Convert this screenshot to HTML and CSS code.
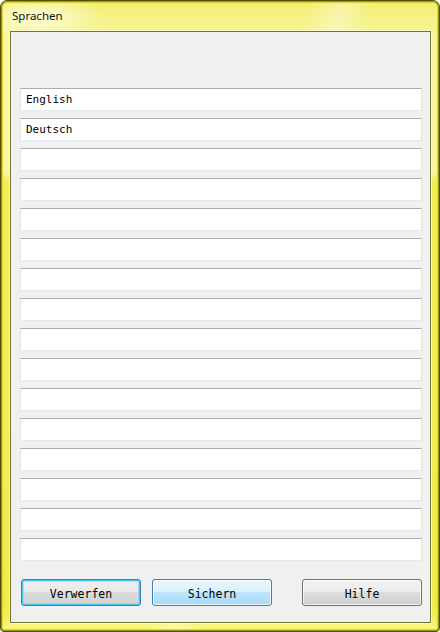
FILE: index.html
```html
<!DOCTYPE html>
<html>
<head>
<meta charset="utf-8">
<link rel="stylesheet" href="styles.css">
</head>
<body>
<div class="window">
  <div class="titlebar"><span class="title">Sprachen</span></div>
  <div class="client">
    <div class="list">
      <div class="field">English</div>
      <div class="field">Deutsch</div>
      <div class="field"></div>
      <div class="field"></div>
      <div class="field"></div>
      <div class="field"></div>
      <div class="field"></div>
      <div class="field"></div>
      <div class="field"></div>
      <div class="field"></div>
      <div class="field"></div>
      <div class="field"></div>
      <div class="field"></div>
      <div class="field"></div>
      <div class="field"></div>
      <div class="field"></div>
    </div>
    <div class="buttons">
      <button class="btn btn-focus">Verwerfen</button>
      <button class="btn btn-hover">Sichern</button>
      <span class="spacer"></span>
      <button class="btn">Hilfe</button>
    </div>
  </div>
</div>
</body>
</html>
```

FILE: styles.css
```css
html, body {
  margin: 0;
  padding: 0;
  width: 440px;
  height: 632px;
  overflow: hidden;
  background: #ffffff;
}

.window {
  box-sizing: border-box;
  width: 440px;
  height: 632px;
  border: 1px solid #4f4c00;
  border-radius: 7px 7px 4px 4px;
  box-shadow: inset 0 0 0 1px #a09c10, inset 0 0 0 2px #d6d235;
  background:
    radial-gradient(ellipse 70px 22px at 36px 16px, rgba(255,255,235,0.85), rgba(255,255,235,0) 100%),
    linear-gradient(105deg, rgba(255,255,255,0) 0, rgba(255,255,255,0) 300px, rgba(255,255,255,0.35) 330px, rgba(255,255,255,0) 360px),
    linear-gradient(to bottom, #f2ee70 0, #f8f6a2 40px, #f8f6a0 172px, #f1ee55 180px, #efec4c 610px, #f8f680 628px);
  padding: 0 8px 8px 9px;
  display: flex;
  flex-direction: column;
}

.titlebar {
  height: 30px;
  flex: none;
  display: flex;
  align-items: flex-start;
}

.title {
  font-family: "Segoe UI", "Noto Sans", sans-serif;
  font-size: 11.5px;
  color: #111111;
  margin: 7px 0 0 2px;
  line-height: 16px;
}

.client {
  flex: 1;
  box-sizing: border-box;
  border: 1px solid #737337;
  box-shadow: 0 0 0 1px rgba(255,255,220,0.7);
  background: #f0f0f0;
  padding: 56px 8px 0 9px;
  display: flex;
  flex-direction: column;
}

.list {
  display: flex;
  flex-direction: column;
  gap: 7px;
}

.field {
  box-sizing: border-box;
  height: 23px;
  background: #ffffff;
  border-style: solid;
  border-width: 1px;
  border-color: #abadb3 #e2e3ea #e3e9ef #e2e3ea;
  font-family: "DejaVu Sans Mono", "Liberation Mono", monospace;
  font-size: 11px;
  line-height: 21px;
  color: #000000;
  padding-left: 5px;
}

.buttons {
  display: flex;
  align-items: center;
  margin-top: 18px;
  gap: 11px;
  padding-left: 1px;
}

.spacer {
  flex: 1;
}

.btn {
  box-sizing: border-box;
  width: 120px;
  height: 27px;
  margin: 0;
  padding: 2px 0 0 0;
  border: 1px solid #707070;
  border-radius: 3px;
  background: linear-gradient(to bottom, #f2f2f2 0, #ebebeb 50%, #dddddd 50%, #cfcfcf 100%);
  box-shadow: inset 0 0 0 1px rgba(255,255,255,0.75);
  font-family: "DejaVu Sans Mono", "Liberation Mono", monospace;
  font-size: 11.5px;
  color: #000000;
  text-align: center;
}

.btn-focus {
  border-color: #3c7fb1;
  box-shadow: inset 0 0 0 1px #48c8f0, inset 0 0 0 2px rgba(120,215,245,0.6);
  background: linear-gradient(to bottom, #f0f0f0 0, #e8e8e8 50%, #dcdcdc 50%, #d0d0d0 100%);
}

.btn-hover {
  border-color: #3c7fb1;
  background: linear-gradient(to bottom, #eaf6fd 0, #d9f0fc 50%, #bee6fd 50%, #a7d9f5 100%);
}
```
